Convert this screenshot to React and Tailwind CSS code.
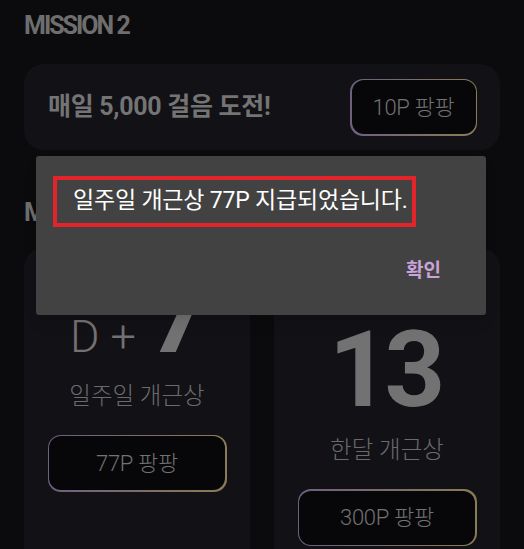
const font = { fontFamily: "Roboto, 'Noto Sans CJK KR', sans-serif" };

function PointButton({ label, className = '' }) {
  return (
    <div className={`rounded-[13px] p-[1.5px] bg-gradient-to-r from-[#6f5f80] via-[#7a6d6a] to-[#8a7c55] ${className}`}>
      <div className="h-full w-full rounded-[12px] bg-[#070709] flex items-center justify-center">
        <span className="text-[22px] font-light text-[#727272] tracking-[-0.3px]">{label}</span>
      </div>
    </div>
  );
}

export default function App() {
  return (
    <div className="relative h-[549px] overflow-hidden bg-[#0b0b0d]" style={font}>
      <div className="px-6 pt-[11px]">
        {/* Mission 2 */}
        <h2 className="text-[25px] leading-[30px] font-bold text-[#6e6e6e] tracking-[-2px]">MISSION 2</h2>
        <div className="mt-[23px] h-[86px] rounded-[20px] bg-[#121116] flex items-center justify-between pl-6 pr-[23px]">
          <span className="text-[25px] font-bold text-[#747474] tracking-[-0.3px]">매일 5,000 걸음 도전!</span>
          <PointButton label="10P 팡팡" className="w-[127px] h-[57px]" />
        </div>

        {/* Mission 3 */}
        <h2 className="mt-[48px] text-[25px] leading-[30px] font-bold text-[#6e6e6e] tracking-[-2px]">MISSION 3</h2>
        <div className="mt-[20px] grid grid-cols-2 gap-6">
          <div className="h-[320px] rounded-t-[20px] bg-[#121116] flex flex-col items-center pt-[12px]">
            <div className="flex items-baseline text-[#727272] pl-[6px]">
              <span className="text-[45px] font-light">D +</span>
              <span className="ml-[12px] text-[108px] leading-[110px] font-bold">7</span>
            </div>
            <span className="mt-[10px] text-[23.5px] leading-[30px] font-light text-[#6b6b6b]">일주일 개근상</span>
            <PointButton label="77P 팡팡" className="mt-[24px] w-[179px] h-[57px]" />
          </div>
          <div className="h-[320px] rounded-t-[20px] bg-[#121116] flex flex-col items-center pt-[67px]">
            <span className="text-[106px] leading-[110px] font-bold text-[#727272] tracking-[-5px] pr-[5px]">13</span>
            <span className="mt-[10px] text-[23.5px] leading-[30px] font-light text-[#6b6b6b]">한달 개근상</span>
            <PointButton label="300P 팡팡" className="mt-[24px] w-[179px] h-[57px]" />
          </div>
        </div>
      </div>

      {/* Dialog */}
      <div className="absolute left-[36px] top-[156px] w-[450px] h-[159px] rounded-[3px] bg-[#424242] shadow-lg">
        <div className="ml-[17px] mt-[20px] w-[363px] h-[51px] border-[4px] border-[#e3242b] flex items-center pl-[16px]">
          <span className="text-[23px] text-white tracking-[-0.2px]">일주일 개근상 77P 지급되었습니다.</span>
        </div>
        <div className="flex justify-end pr-[45px] mt-[30px]">
          <span className="text-[19px] font-bold text-[#c9a3d9]">확인</span>
        </div>
      </div>
    </div>
  );
}
